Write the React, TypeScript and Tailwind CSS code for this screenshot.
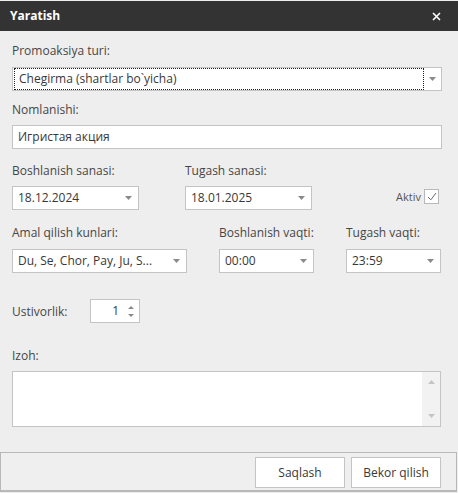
import React from "react";

const font = { fontFamily: '"Open Sans", "Noto Sans", Arial, sans-serif' };

function Arrow({ up = false, color = "#8a8a8a" }: { up?: boolean; color?: string }) {
  return (
    <svg width="7" height="4" viewBox="0 0 7 4">
      <path d={up ? "M0 4 L3.5 0 L7 4 Z" : "M0 0 L7 0 L3.5 4 Z"} fill={color} />
    </svg>
  );
}

function Combo({ value, className }: { value: string; className: string }) {
  return (
    <div className={`flex h-[24px] items-center border border-[#c4c4c4] bg-white ${className}`}>
      <span className="flex-1 truncate pl-[5px] text-[12px] text-[#383838]">{value}</span>
      <span className="flex w-[20px] items-center justify-center">
        <Arrow />
      </span>
    </div>
  );
}

function Label({ children, className = "" }: { children: React.ReactNode; className?: string }) {
  return <div className={`text-[12px] leading-[17px] text-[#464646] ${className}`}>{children}</div>;
}

export default function App() {
  return (
    <div style={font} className="flex h-[493px] w-[458px] flex-col overflow-hidden bg-[#eeeeee]">
      <header className="mt-[1px] flex h-[30px] items-center justify-between bg-[#333333] pl-[10px] pr-[17px]">
        <span className="text-[12px] font-bold text-white">Yaratish</span>
        <svg width="9" height="9" viewBox="0 0 9 9">
          <path d="M1 1 L8 8 M8 1 L1 8" stroke="#ffffff" strokeWidth="1.6" />
        </svg>
      </header>

      <div className="flex flex-col px-[12px]">
        <Label className="mt-[11px]">Promoaksiya turi:</Label>
        <div className="mt-[8px] flex h-[24px] w-[430px] items-center border border-[#c4c4c4] bg-white">
          <span className="ml-[1px] flex h-[22px] flex-1 items-center border border-dotted border-[#202020] pl-[4px] text-[12px] text-[#383838]">
            Chegirma (shartlar bo`yicha)
          </span>
          <span className="flex w-[17px] items-center justify-center">
            <Arrow />
          </span>
        </div>

        <Label className="mt-[10px]">Nomlanishi:</Label>
        <div className="mt-[7px] flex h-[24px] w-[430px] items-center border border-[#c4c4c4] bg-white pl-[5px] text-[12px] text-[#383838]">
          Игристая акция
        </div>

        <div className="mt-[13px] flex">
          <div className="flex w-[173px] flex-col">
            <Label>Boshlanish sanasi:</Label>
            <Combo value="18.12.2024" className="mt-[7px] w-[127px]" />
          </div>
          <div className="flex flex-col">
            <Label>Tugash sanasi:</Label>
            <Combo value="18.01.2025" className="mt-[7px] w-[127px]" />
          </div>
          <div className="ml-auto mr-[7px] flex items-center gap-[3px] self-end pb-[5px]">
            <span className="text-[11px] text-[#555555]">Aktiv</span>
            <span className="flex h-[15px] w-[15px] items-center justify-center border border-[#b8b8b8] bg-white">
              <svg width="10" height="9" viewBox="0 0 10 9">
                <path d="M1 5 L3.8 7.8 L9 1" stroke="#6a6a6a" strokeWidth="1" fill="none" />
              </svg>
            </span>
          </div>
        </div>

        <div className="mt-[14px] flex">
          <div className="flex w-[207px] flex-col">
            <Label>Amal qilish kunlari:</Label>
            <Combo value="Du, Se, Chor, Pay, Ju, S..." className="mt-[8px] w-[175px]" />
          </div>
          <div className="flex w-[127px] flex-col">
            <Label>Boshlanish vaqti:</Label>
            <Combo value="00:00" className="mt-[8px] w-[95px]" />
          </div>
          <div className="flex flex-col">
            <Label>Tugash vaqti:</Label>
            <Combo value="23:59" className="mt-[8px] w-[95px]" />
          </div>
        </div>

        <div className="mt-[26px] flex items-center">
          <Label className="w-[78px]">Ustivorlik:</Label>
          <div className="flex h-[24px] w-[50px] items-center border border-[#c4c4c4] bg-white">
            <span className="flex-1 pr-[4px] text-right text-[12px] text-[#383838]">1</span>
            <span className="flex w-[16px] flex-col items-center gap-[5px]">
              <svg width="6" height="3" viewBox="0 0 6 3">
                <path d="M0 3 L3 0 L6 3 Z" fill="#8a8a8a" />
              </svg>
              <svg width="6" height="3" viewBox="0 0 6 3">
                <path d="M0 0 L6 0 L3 3 Z" fill="#8a8a8a" />
              </svg>
            </span>
          </div>
        </div>

        <Label className="mt-[24px]">Izoh:</Label>
        <div className="mt-[7px] flex h-[56px] w-[429px] border border-[#c4c4c4] bg-white">
          <div className="flex-1" />
          <div className="flex w-[18px] flex-col items-center justify-between bg-[#f2f2f2] py-[8px]">
            <Arrow up color="#c4c4c4" />
            <Arrow color="#c4c4c4" />
          </div>
        </div>
      </div>

      <footer className="mb-[1px] mt-auto flex h-[40px] w-[457px] justify-end gap-[6px] border border-b-2 border-[#b8b8b8] bg-[#efefef] pr-[15px] pt-[4px]">
        <button className="h-[31px] w-[90px] border border-[#c4c4c4] bg-white text-[12px] text-[#383838]">
          Saqlash
        </button>
        <button className="h-[31px] w-[90px] border border-[#c4c4c4] bg-white text-[12px] text-[#383838]">
          Bekor qilish
        </button>
      </footer>
    </div>
  );
}
